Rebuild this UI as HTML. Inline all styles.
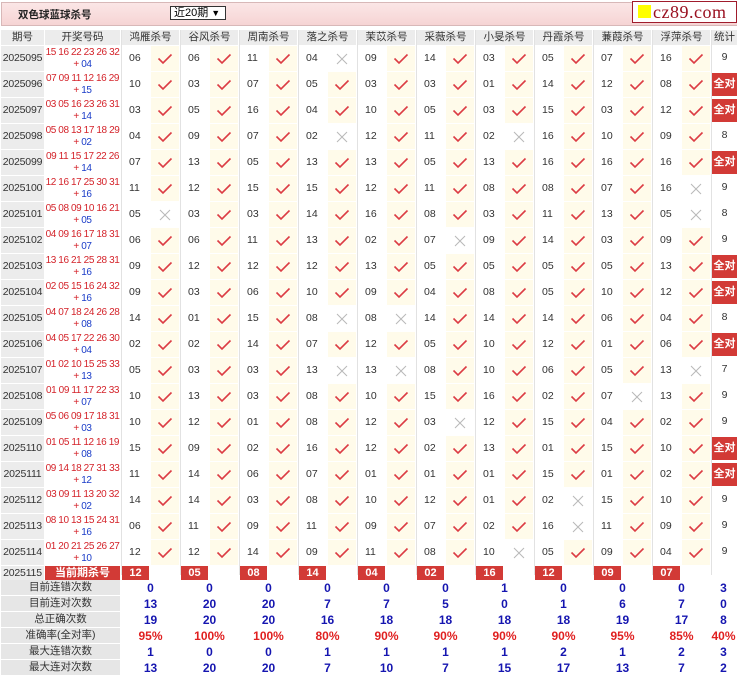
<!DOCTYPE html>
<html><head><meta charset="utf-8">
<style>
body{margin:0;width:737px;height:680px;background:#fff;position:relative;overflow:hidden;font-family:"Liberation Sans","Noto Sans CJK SC",sans-serif;}
.a{position:absolute;box-sizing:border-box;white-space:nowrap;}
.t{position:absolute;left:1px;top:2px;width:736px;height:22px;border:1px solid #d8b8b8;background:linear-gradient(#fbe6e6,#f6d4d4);}
.hd{background:#ececec;color:#333;font-size:10.5px;text-align:center;line-height:15px;top:30px;height:15px;}
.pd{background:#ececec;color:#333;font-size:10.5px;text-align:center;letter-spacing:-0.2px;}
.dr{color:#d4232a;font-size:10px;text-align:center;line-height:12px;letter-spacing:-0.4px;overflow:hidden;}
.dr b{color:#1a3cc8;font-weight:normal;}
.n{font-size:10.5px;color:#333;}
.y{background:#fffbea;}
.qd{background:#d23a36;color:#fff;font-weight:bold;font-size:11px;text-align:center;}
.st{font-weight:bold;font-size:12px;color:#1515b0;text-align:center;line-height:16px;}
.r{color:#e02020;}
.lb{background:#e6e6e6;color:#333;font-size:10.5px;text-align:center;line-height:15px;}
.vl{background:#e2e2e2;width:1px;}
</style></head><body>
<div class="t"></div>
<div class="a" style="left:18px;top:7px;font-size:10.5px;font-weight:bold;color:#222;">双色球蓝球杀号</div>
<div class="a" style="left:170px;top:6px;width:56px;height:14px;border:1px solid #333;background:#fff;font-size:11px;line-height:12px;padding-left:3px;">近20期 <span style="font-size:9px">▼</span></div>
<div class="a" style="left:632px;top:1px;width:105px;height:22px;border:1px solid #a01c2c;background:#fff;"></div>
<div class="a" style="left:638px;top:5px;width:13px;height:13px;background:#ffff00;"></div>
<div class="a" style="left:653px;top:0px;font-family:'Liberation Serif',serif;font-size:18px;color:#9a1020;letter-spacing:0.5px;line-height:24px;">cz89.com</div>
<div id="g"></div>
<script>
var H=['鸿雁','谷风','周南','落之','茉苡','采薇','小旻','丹霞','蒹葭','浮萍'];
var D=[
['15 16 22 23 26 32','04','06 06 11 04 09 14 03 05 07 16','1110111111','9'],
['07 09 11 12 16 29','15','10 03 07 05 03 03 01 14 12 08','1111111111','全对'],
['03 05 16 23 26 31','14','03 05 16 04 10 05 03 15 03 12','1111111111','全对'],
['05 08 13 17 18 29','02','04 09 07 02 12 11 02 16 10 09','1110110111','8'],
['09 11 15 17 22 26','14','07 13 05 13 13 05 13 16 16 16','1111111111','全对'],
['12 16 17 25 30 31','16','11 12 15 15 12 11 08 08 07 16','1111111110','9'],
['05 08 09 10 16 21','05','05 03 03 14 16 08 03 11 13 05','0111111110','8'],
['04 09 16 17 18 31','07','06 06 11 13 02 07 09 14 03 09','1111101111','9'],
['13 16 21 25 28 31','16','09 12 12 12 13 05 05 05 05 13','1111111111','全对'],
['02 05 15 16 24 32','16','09 03 06 10 09 04 08 05 10 12','1111111111','全对'],
['04 07 18 24 26 28','08','14 01 15 08 08 14 14 14 06 04','1110011111','8'],
['04 05 17 22 26 30','04','02 02 14 07 12 05 10 12 01 06','1111111111','全对'],
['01 02 10 15 25 33','13','05 03 03 13 13 08 10 06 05 13','1110011110','7'],
['01 09 11 17 22 33','07','10 13 03 08 10 15 16 02 07 13','1111111101','9'],
['05 06 09 17 18 31','03','10 12 01 08 12 03 12 15 04 02','1111101111','9'],
['01 05 11 12 16 19','08','15 09 02 16 12 02 13 01 15 10','1111111111','全对'],
['09 14 18 27 31 33','12','11 14 06 07 01 01 01 15 01 02','1111111111','全对'],
['03 09 11 13 20 32','02','14 14 03 08 10 12 01 02 15 10','1111111011','9'],
['08 10 13 15 24 31','16','06 11 09 11 09 07 02 16 11 09','1111111011','9'],
['01 20 21 25 26 27','10','12 12 14 09 11 08 10 05 09 04','1111110111','9']];
var CK='<svg width="16" height="12" viewBox="0 0 16 12"><path d="M1.5 5.5 L6 10 L14.5 1.5" fill="none" stroke="#dc3c44" stroke-width="1.6"/></svg>';
var XX='<svg width="12" height="12" viewBox="0 0 12 12"><path d="M1 1 L11 11 M11 1 L1 11" fill="none" stroke="#b8b8b8" stroke-width="1"/></svg>';
var h='';
function d(s,c,x,y,w,hh,ex){h+='<div class="a '+c+'" style="left:'+x+'px;top:'+y+'px;width:'+w+'px;height:'+hh+'px;'+(ex||'')+'">'+s+'</div>';}
d('期号','hd',1,30,43,15);d('开奖号码','hd',45,30,75,15);
for(var i=0;i<10;i++){var x=122+59*i;d(H[i]+'杀号','hd',x,30,57,15);d('','vl',x-1.5,30,1,545);}
d('统计','hd',712,30,25,15);d('','vl',710.5,30,1,545);
for(var r=0;r<20;r++){var y=45+26*r,R=D[r];
d('2025'+(95+r<100?'0'+(95+r):(95+r)),'pd',1,y+1,43,25,'line-height:25px;');
d(R[0]+'<br>+ <b>'+R[1]+'</b>','dr',45,y+1,75,25,'padding-top:1px;');
var ns=R[2].split(' ');
for(var i=0;i<10;i++){var x=122+59*i,ok=R[3][i]=='1';
d(ns[i],'n',x+7,y+7,22,14);
d(ok?CK:XX,ok?'y':'',x+29,y+1,28,25,'display:flex;align-items:center;justify-content:center;');}
if(R[4]=='全对')d('全对','qd',712,y+2,25,23,'line-height:23px;');
else d(R[4],'n',712,y+6,25,14,'text-align:center;');}
var Y=565;d('2025115','pd',1,Y+1,43,14,'line-height:14px;');
d('当前期杀号','qd',45,Y+1,75,14,'line-height:14px;');
var C='12 05 08 14 04 02 16 12 09 07'.split(' ');
for(var i=0;i<10;i++)d(C[i],'qd',122+59*i,Y+1,27,14,'line-height:14px;');
var L=['目前连错次数','目前连对次数','总正确次数','准确率(全对率)','最大连错次数','最大连对次数'];
var S=[['0 0 0 0 0 0 1 0 0 0','3'],['13 20 20 7 7 5 0 1 6 7','0'],['19 20 20 16 18 18 18 18 19 17','8'],['95% 100% 100% 80% 90% 90% 90% 90% 95% 85%','40%'],['1 0 0 1 1 1 1 2 1 2','3'],['13 20 20 7 10 7 15 17 13 7','2']];
for(var k=0;k<6;k++){var y=580+16*k;d(L[k],'lb',1,y,119,15);var v=S[k][0].split(' ');
for(var i=0;i<10;i++)d(v[i],'st'+(k==3?' r':''),121+59*i,y,59,16);
d(S[k][1],'st'+(k==3?' r':''),710,y,27,16);}
document.getElementById('g').innerHTML=h;
</script>
</body></html>
